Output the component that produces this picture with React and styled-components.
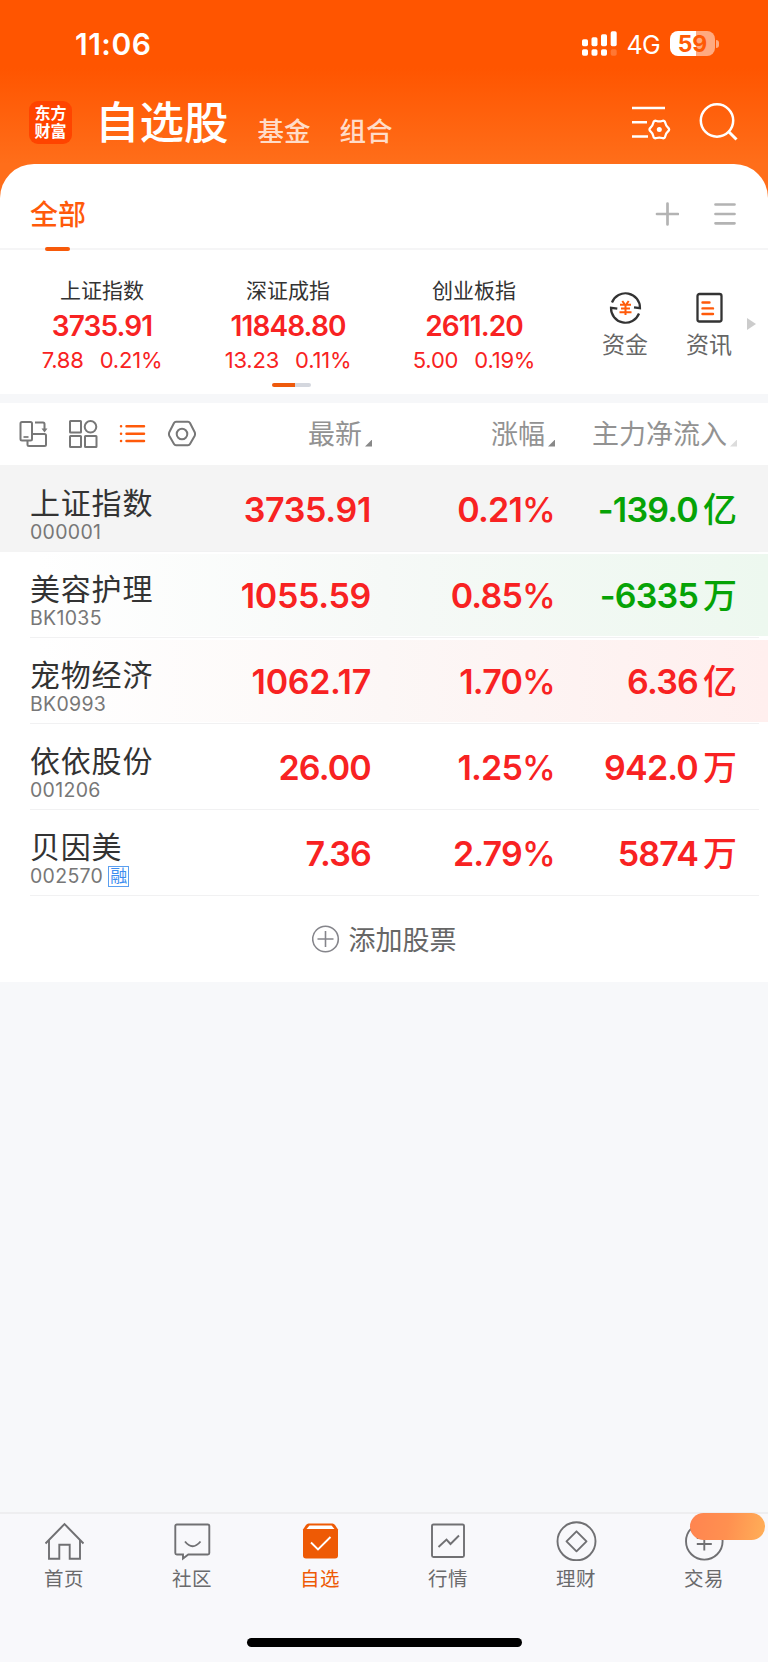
import React from "react";
import styled, {createGlobalStyle, css} from 'styled-components';

const GlobalStyle = createGlobalStyle`
  * {
    box-sizing: border-box;
  }
  body {
    margin: 0;
    background: #f7f8fa;
    font-family: Inter, "Noto Sans CJK SC", sans-serif;
    color: #333;
  }
  svg {
    display: block;
    flex: none;
  }
`;

const Page = styled.div`
  display: flex;
  flex-direction: column;
  width: 768px;
  height: 1662px;
  overflow: hidden;
  background: #f7f8fa;
`;

const Hero = styled.div`
  height: 982px;
  flex: none;
  background: linear-gradient(#ff5500 0, #ff5500 68px, #ff6e1a 164px, #ff6e1a 100%);
`;

const StatusBar = styled.div`
  display: flex;
  align-items: center;
  height: 87px;
  padding: 0 49px 0 75px;
  color: #fff;
`;

const Clock = styled.div`
  flex: 1;
  font-size: 30px;
  font-weight: 600;
  line-height: 88px;
  letter-spacing: 0.5px;
`;

const Network = styled.div`
  margin: 2px 10px 0 9px;
  font-size: 25px;
  line-height: 30px;
  letter-spacing: -0.7px;
`;

const Battery = styled.div`
  width: 45px;
  height: 25px;
  border-radius: 8px;
  background: linear-gradient(90deg, #fff 58%, #ffaa80 58%);
  color: #ff5a05;
  font-size: 23px;
  font-weight: 700;
  line-height: 26px;
  text-align: center;
`;

const BatteryTip = styled.div`
  width: 3px;
  height: 8px;
  margin-left: 1px;
  border-radius: 0 4px 4px 0;
  background: #ffaa80;
`;

const TitleBar = styled.div`
  display: flex;
  height: 77px;
  padding: 14px 29px 0 29px;
  color: #fff;
`;

const Logo = styled.div`
  width: 43px;
  height: 43px;
  padding: 3px 0 0 0;
  border-radius: 9px;
  background: #ff4400;
  font-size: 16px;
  font-weight: 700;
  line-height: 18px;
  text-align: center;
`;

const Title = styled.h1`
  margin: 0 0 0 23px;
  font-size: 44.5px;
  font-weight: 500;
  line-height: 45px;
`;

const TitleTab = styled.div`
  margin: 17px 0 0 ${props => props.gap}px;
  font-size: 26.5px;
  font-weight: 500;
  line-height: 27px;
  color: #ffdcc8;
`;

const TitleIcons = styled.div`
  display: flex;
  gap: 28px;
  margin: 2px 0 0 auto;
`;

const Sheet = styled.div`
  height: 818px;
  border-radius: 34px 34px 0 0;
  background: #fff;
`;

const GroupBar = styled.div`
  display: flex;
  align-items: center;
  height: 86px;
  padding: 16px 31px 0 30px;
  border-bottom: 2px solid #f5f5f6;
`;

const GroupTab = styled.div`
  position: relative;
  flex: 1;
  padding-top: 1px;
  font-size: 28px;
  font-weight: 500;
  line-height: 40px;
  color: #ff5a0a;
  &::after {
    content: "";
    position: absolute;
    left: 15px;
    top: 53px;
    width: 25px;
    height: 4px;
    border-radius: 2px;
    background: #f75a0a;
  }
`;

const IndexPanel = styled.div`
  position: relative;
  display: flex;
  height: 144px;
  padding-left: 9px;
`;

const IndexCard = styled.div`
  width: 186px;
  padding-top: 28px;
  text-align: center;
  color: #f82222;
`;

const IndexName = styled.div`
  font-size: 21px;
  line-height: 26px;
  color: #333;
`;

const IndexValue = styled.div`
  margin-top: 7px;
  font-size: 28px;
  font-weight: 600;
  line-height: 30px;
  letter-spacing: -0.9px;
`;

const IndexChange = styled.div`
  display: flex;
  justify-content: center;
  gap: 16px;
  margin-top: 7px;
  font-size: 22px;
  line-height: 24px;
  letter-spacing: -0.2px;
`;

const Pager = styled.div`
  position: absolute;
  left: 272px;
  top: 133px;
  width: 39px;
  height: 4px;
  border-radius: 2px;
  background: linear-gradient(90deg, #ee5a0c 59%, #d4d7de 59%);
`;

const Shortcuts = styled.div`
  display: flex;
  margin-left: 16px;
`;

const Shortcut = styled.div`
  display: flex;
  flex-direction: column;
  align-items: center;
  width: 84px;
  padding-top: 41px;
  font-size: 23px;
  line-height: 26px;
  color: #666;
  svg {
    margin-bottom: 7px;
  }
`;

const Divider = styled.div`
  height: 9px;
  background: #f6f7f9;
`;

const columns = css`
  display: grid;
  grid-template-columns: 201px 140px 183px 182px;
  padding: 0 32px 0 30px;
`;

const ListHeader = styled.div`
  ${columns}
  height: 63px;
  align-items: center;
  border-bottom: 1px solid #f4f4f4;
`;

const ViewIcons = styled.div`
  display: flex;
  align-items: center;
  gap: 20px;
  margin-left: -11px;
`;

const SortLabel = styled.div`
  display: flex;
  justify-content: flex-end;
  align-items: center;
  margin-right: -1px;
  padding-top: 2px;
  font-size: 27px;
  line-height: 40px;
  white-space: nowrap;
  color: #929292;
  &::after {
    content: "";
    flex: none;
    width: 7px;
    height: 7px;
    margin: 16px 0 0 3px;
    background: ${props => props.faint ? '#dcdcdc' : '#888'};
    clip-path: polygon(100% 0, 100% 100%, 0 100%);
  }
`;

const rowTints = {
  active: '#f4f4f4',
  green: 'linear-gradient(90deg, #fff 5%, #f6f9f7 50%, #edf8ef 100%) 0 2px / 100% 82px no-repeat',
  red: 'linear-gradient(90deg, #fff 5%, #fcf7f6 50%, #ffefee 100%) 0 2px / 100% 82px no-repeat'
};

const Row = styled.div`
  ${columns}
  position: relative;
  height: 86px;
  background: ${props => rowTints[props.tint] || '#fff'};
  &::after {
    content: "";
    position: absolute;
    left: 30px;
    right: 9px;
    bottom: 0;
    height: 1px;
    background: #f1f1f2;
  }
`;

const StockName = styled.div`
  padding-top: 19px;
  font-size: 30px;
  line-height: 36px;
  letter-spacing: 0.8px;
`;

const StockCode = styled.div`
  display: flex;
  align-items: center;
  gap: 5px;
  font-size: 19.5px;
  line-height: 23px;
  letter-spacing: 0.3px;
  color: #777;
`;

const Badge = styled.span`
  width: 21px;
  height: 21px;
  border: 1px solid #5b9ff0;
  font-size: 17px;
  line-height: 19px;
  letter-spacing: 0;
  text-align: center;
  color: #3d8df0;
`;

const Figure = styled.div`
  display: flex;
  justify-content: flex-end;
  font-size: 34px;
  font-weight: 600;
  line-height: 87px;
  letter-spacing: ${props => props.wide ? '-0.3px' : '-0.8px'};
  white-space: nowrap;
  color: ${props => props.down ? '#06a306' : '#f82222'};
`;

const Percent = styled.span`
  margin-right: -1px;
  font-weight: 500;
`;

const Unit = styled.span`
  margin: 0 -1px 0 5px;
  font-size: 34px;
  font-weight: 500;
  letter-spacing: 0;
`;

const AddStock = styled.div`
  display: flex;
  justify-content: center;
  align-items: center;
  gap: 9px;
  height: 85px;
  font-size: 27px;
  color: #666;
`;

const TabBar = styled.div`
  display: flex;
  height: 108px;
  margin-top: auto;
  flex: none;
  border-top: 2px solid #eeeef0;
  background: #f8f8fb;
`;

const Tab = styled.div`
  position: relative;
  display: flex;
  flex-direction: column;
  align-items: center;
  width: 128px;
  padding-top: 7px;
  font-size: 19.5px;
  line-height: 26px;
  letter-spacing: 0.5px;
  color: ${props => props.active ? '#ee5a05' : '#6a6a6c'};
  svg {
    margin-bottom: 5px;
  }
`;

const Promo = styled.div`
  position: absolute;
  left: 50px;
  top: -1px;
  width: 75px;
  height: 27px;
  border-radius: 14px;
  background: linear-gradient(100deg, #ff8450, #ff9050 50%, #ffaf58);
`;

const HomeArea = styled.div`
  flex: none;
  height: 42px;
  padding-top: 18px;
  background: #f8f8fb;
`;

const HomeIndicator = styled.div`
  width: 275px;
  height: 9px;
  margin: 0 auto;
  border-radius: 5px;
  background: #000;
`;

// six rounded teeth, curves run between the midpoints of tooth and valley
const gearPath = (cx, cy, outer, inner) => {
  const pts = Array.from({length: 12}, (_, i) => {
    const r = i % 2 ? inner : outer;
    const a = i * Math.PI / 6;
    return [cx + r * Math.cos(a), cy + r * Math.sin(a)];
  });
  const mid = i => {
    const [a, b] = [pts[i % 12], pts[(i + 1) % 12]];
    return `${(a[0] + b[0]) / 2} ${(a[1] + b[1]) / 2}`;
  };
  return `M${mid(11)}` + pts.map((p, i) => `Q${p[0]} ${p[1]} ${mid(i)}`).join('') + 'Z';
};

const Signal = () => (
  <svg width="36" height="26" viewBox="0 0 36 26" fill="#fff">
    <rect x="0" y="8.3" width="6" height="7" rx="1.7"/>
    <rect x="9.5" y="6.3" width="6" height="9" rx="1.7"/>
    <rect x="19" y="3.3" width="6" height="12" rx="1.7"/>
    <rect x="28.7" y="0.3" width="6" height="15" rx="1.7"/>
    <rect x="0" y="18.3" width="6" height="6.5" rx="1.7"/>
    <rect x="9.5" y="18.3" width="6" height="6.5" rx="1.7"/>
    <rect x="19" y="18.3" width="6" height="6.5" rx="1.7"/>
    <rect x="28.7" y="18.3" width="6" height="6.5" rx="1.7" opacity="0.2"/>
  </svg>
);

const ListSettings = () => (
  <svg width="40" height="40" viewBox="0 0 40 40" fill="none" stroke="#fff" strokeWidth="2.6">
    <path d="M1 5h33M1 19.2h15M1 33.5h16"/>
    <path d={gearPath(28.3, 26.5, 10.9, 7.6)} strokeWidth="2.3"/>
    <circle cx="28.3" cy="26.5" r="2.5" fill="#fff" stroke="none"/>
  </svg>
);

const SearchIcon = () => (
  <svg width="40" height="40" viewBox="0 0 40 40" fill="none" stroke="#fff" strokeWidth="2.5">
    <circle cx="18" cy="17.5" r="16.2"/>
    <path d="M29.5 28.5l8 8" strokeWidth="3"/>
  </svg>
);

const PlusIcon = () => (
  <svg width="24" height="24" viewBox="0 0 24 24" fill="none" stroke="#b3b3b3" strokeWidth="2.7" strokeLinecap="round">
    <path d="M12.5 1.5v21M2 12h21"/>
  </svg>
);

const MenuIcon = () => (
  <svg width="24" height="24" viewBox="0 0 24 24" fill="none" stroke="#b3b3b3" strokeWidth="2.7" strokeLinecap="round">
    <path d="M2.5 2.5h19M2.5 12h19M2.5 21.3h19"/>
  </svg>
);

const MenuWrap = styled.div`
  margin-left: 34px;
`;

const MoneyIcon = () => (
  <svg width="34" height="34" viewBox="0 0 34 34" fill="none" stroke="#333" strokeWidth="2.2">
    <path d="M4 11.5a14.5 14.5 0 0 1 28 5.700l-6-.8"/>
    <path d="M31 22.5a14.5 14.5 0 0 1-28-5.700l6.300.9"/>
    <path d="M14.3 10l2.2 3M20.7 10l-2.2 3M12 13.8h11M13 17.6h9M11.5 21.3h12M17.5 13v11" stroke="#ff5a0a" strokeWidth="2"/>
  </svg>
);

const NewsIcon = () => (
  <svg width="34" height="34" viewBox="0 0 34 34" fill="none" stroke="#333" strokeWidth="2.3">
    <rect x="5.5" y="3" width="24" height="27.5" rx="2"/>
    <path d="M10.5 11.5h7M10.5 17.4h10.5M10.5 23h10.5" stroke="#ff5a0a" strokeWidth="2.4" strokeLinecap="round"/>
  </svg>
);

const MoreArrow = styled.div`
  width: 9px;
  height: 12px;
  margin: 68px 0 0 -4px;
  background: #ccc;
  clip-path: polygon(0 0, 100% 50%, 0 100%);
`;

const RotateIcon = () => (
  <svg width="29" height="28" viewBox="0 0 29 28" fill="none" stroke="#777" strokeWidth="2">
    <rect x="1.5" y="2" width="11.5" height="18.5" rx="1.5"/>
    <path d="M4.500 17h5" strokeWidth="1.7"/>
    <path d="M16 2.5h8a1.500 1.500 0 0 1 1.500 1.500v6"/>
    <path d="M22.500 8.500l3 4 3-4z" fill="#777" stroke="none"/>
    <path d="M13 14h12.500a1.500 1.500 0 0 1 1.500 1.500v9a1.500 1.500 0 0 1-1.500 1.500h-15.500a1.500 1.500 0 0 1-1.500-1.500v-3.500"/>
  </svg>
);

const GridIcon = () => (
  <svg width="30" height="30" viewBox="0 0 30 30" fill="none" stroke="#777" strokeWidth="2">
    <rect x="2" y="2" width="11" height="11.5" rx="0.5"/>
    <circle cx="22.5" cy="7.8" r="5.8"/>
    <rect x="2" y="17" width="11" height="11" rx="0.5"/>
    <rect x="17" y="17" width="11.5" height="11" rx="0.5"/>
  </svg>
);

const ListIcon = () => (
  <svg width="28" height="22" viewBox="0 0 28 22" fill="none" stroke="#ff5a0a" strokeWidth="2.5" strokeLinecap="round">
    <path d="M8.500 3.300h17.500M8.500 10.700h17.500M8.500 17.900h17.500"/>
    <path d="M3 3.300h.1M3 10.700h.1M3 17.900h.1"/>
  </svg>
);

const HexIcon = () => (
  <svg width="30" height="28" viewBox="0 0 30 28" fill="none" stroke="#777" strokeWidth="2" strokeLinejoin="round">
    <path d="M10 1.800h12q1.300 0 2 1.200l4.600 9q.9 2 0 4l-4.600 8q-.7 1.200-2 1.200h-12q-1.300 0-2-1.200l-4.600-8q-.9-2 0-4l4.600-9q.7-1.200 2-1.200z"/>
    <circle cx="16" cy="14" r="5.3"/>
  </svg>
);

const AddIcon = () => (
  <svg width="28" height="28" viewBox="0 0 28 28" fill="none" stroke="#85858b" strokeWidth="1.6">
    <circle cx="13.5" cy="14" r="12.8"/>
    <path d="M13.5 6v16M5.5 14h16"/>
  </svg>
);

const tabIcons = {
  home: <g>
    <path d="M1.500 22.500L20.500 3l19 19.500"/>
    <path d="M5 19v18.700h10.300v-14h10.400v14h10.300v-18.700"/>
  </g>,
  chat: <g>
    <path d="M4.800 3.500h31a1.500 1.500 0 0 1 1.500 1.500v27a1.500 1.500 0 0 1-1.500 1.500h-19.500l-5.300 4v-4h-6.200a1.500 1.500 0 0 1-1.500-1.500v-27a1.500 1.500 0 0 1 1.500-1.500z"/>
    <path d="M13 20.500q7.500 9.500 15.500 0"/>
  </g>,
  box: <g>
    <path d="M8.500 2.500h24q1.500 0 2.500 1.500l3 4.500v26q0 3-3 3h-29q-3 0-3-3v-26l3-4.500q1-1.500 2.500-1.500z" fill="#ee5a05" stroke="none"/>
    <path d="M9.500 4.500h22l3 3.500h-28z" fill="#fff" stroke="none"/>
    <path d="M11 21.500l7 7 12.500-12.500" stroke="#fff"/>
  </g>,
  chart: <g>
    <rect x="4" y="3.5" width="32" height="32.5" rx="1.5"/>
    <path d="M10.500 26l8-7.500 4 4.500 8.500-8.500"/>
  </g>,
  diamond: <g>
    <circle cx="20.5" cy="20.3" r="19"/>
    <path d="M20.500 10.300l10 10-10 10-10-10z" strokeLinejoin="round"/>
  </g>,
  trade: <g>
    <circle cx="20.3" cy="20.3" r="18.3"/>
    <path d="M14.800 10l5.500 6.500 5.500-6.500M12.800 17h15M12.800 23h15M20.300 16.500v13"/>
  </g>
};

const TabIcon = ({name}) => (
  <svg width="41" height="40" viewBox="0 0 41 40" fill="none" stroke="#707073" strokeWidth="1.9">
    {tabIcons[name]}
  </svg>
);

const indices = [
  {name: '上证指数', value: '3735.91', change: '7.88', rate: '0.21%'},
  {name: '深证成指', value: '11848.80', change: '13.23', rate: '0.11%'},
  {name: '创业板指', value: '2611.20', change: '5.00', rate: '0.19%'}
];

const stocks = [
  {name: '上证指数', code: '000001', price: '3735.91', rate: '0.21', flow: '-139.0', unit: '亿', tint: 'active'},
  {name: '美容护理', code: 'BK1035', price: '1055.59', rate: '0.85', flow: '-6335', unit: '万', tint: 'green'},
  {name: '宠物经济', code: 'BK0993', price: '1062.17', rate: '1.70', flow: '6.36', unit: '亿', tint: 'red'},
  {name: '依依股份', code: '001206', price: '26.00', rate: '1.25', flow: '942.0', unit: '万'},
  {name: '贝因美', code: '002570', price: '7.36', rate: '2.79', flow: '5874', unit: '万', margin: true}
];

const tabs = [
  {icon: 'home', label: '首页'},
  {icon: 'chat', label: '社区'},
  {icon: 'box', label: '自选', active: true},
  {icon: 'chart', label: '行情'},
  {icon: 'diamond', label: '理财'},
  {icon: 'trade', label: '交易', promo: true}
];

export default function App() {
  const cards = indices.map(item => (
    <IndexCard key={item.name}>
      <IndexName>{item.name}</IndexName>
      <IndexValue>{item.value}</IndexValue>
      <IndexChange><span>{item.change}</span><span>{item.rate}</span></IndexChange>
    </IndexCard>
  ));

  const rows = stocks.map(stock => (
    <Row key={stock.code} tint={stock.tint}>
      <div>
        <StockName>{stock.name}</StockName>
        <StockCode>{stock.code}{stock.margin && <Badge>融</Badge>}</StockCode>
      </div>
      <Figure wide={stock.price.length > 6 ? 1 : 0}>{stock.price}</Figure>
      <Figure>{stock.rate}<Percent>%</Percent></Figure>
      <Figure down={stock.flow.startsWith('-') ? 1 : 0}>{stock.flow}<Unit>{stock.unit}</Unit></Figure>
    </Row>
  ));

  return <Page>
    <GlobalStyle/>
    <Hero>
      <StatusBar>
        <Clock>11:06</Clock>
        <Signal/>
        <Network>4G</Network>
        <Battery>59</Battery>
        <BatteryTip/>
      </StatusBar>
      <TitleBar>
        <Logo>东方<br/>财富</Logo>
        <Title>自选股</Title>
        <TitleTab gap={29}>基金</TitleTab>
        <TitleTab gap={29}>组合</TitleTab>
        <TitleIcons>
          <ListSettings/>
          <SearchIcon/>
        </TitleIcons>
      </TitleBar>
      <Sheet>
        <GroupBar>
          <GroupTab>全部</GroupTab>
          <PlusIcon/>
          <MenuWrap><MenuIcon/></MenuWrap>
        </GroupBar>
        <IndexPanel>
          {cards}
          <Pager/>
          <Shortcuts>
            <Shortcut><MoneyIcon/>资金</Shortcut>
            <Shortcut><NewsIcon/>资讯</Shortcut>
          </Shortcuts>
          <MoreArrow/>
        </IndexPanel>
        <Divider/>
        <ListHeader>
          <ViewIcons>
            <RotateIcon/>
            <GridIcon/>
            <ListIcon/>
            <HexIcon/>
          </ViewIcons>
          <SortLabel>最新</SortLabel>
          <SortLabel>涨幅</SortLabel>
          <SortLabel faint={1}>主力净流入</SortLabel>
        </ListHeader>
        {rows}
        <AddStock><AddIcon/>添加股票</AddStock>
      </Sheet>
    </Hero>
    <TabBar>
      {tabs.map(tab => (
        <Tab key={tab.icon} active={tab.active ? 1 : 0}>
          <TabIcon name={tab.icon}/>
          {tab.label}
          {tab.promo && <Promo/>}
        </Tab>
      ))}
    </TabBar>
    <HomeArea><HomeIndicator/></HomeArea>
  </Page>
}
